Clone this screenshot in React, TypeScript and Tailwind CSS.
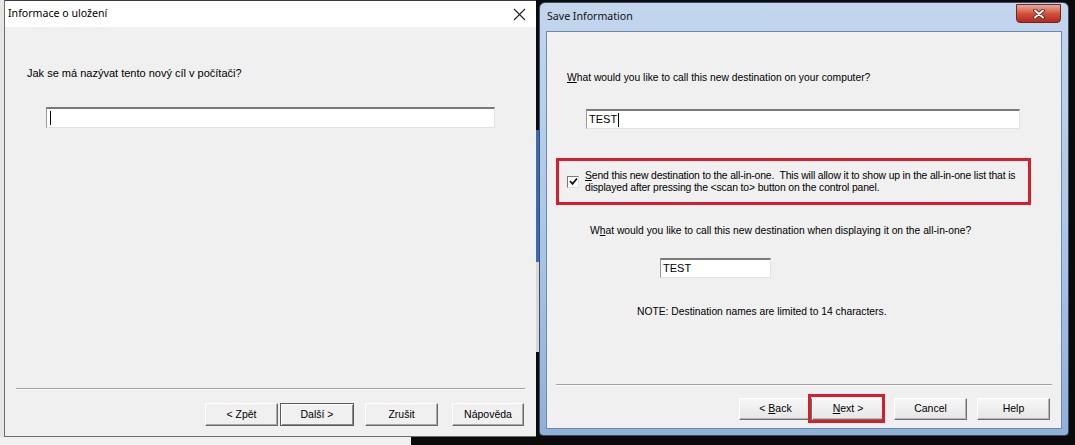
import React from "react";

const ui = "font-['Liberation_Sans',Arial,sans-serif]";
const seg = "font-['Noto_Sans','Open_Sans',sans-serif]";

function ClassicButton({ children, focused = false, w = "w-[73px]" }: { children: React.ReactNode; focused?: boolean; w?: string }) {
  return (
    <button
      className={`${w} h-[23px] ${ui} text-[10.5px] text-black bg-[#f0f0f0] border ${
        focused
          ? "border-[#5a5a5a] shadow-[inset_1px_1px_0_#fff,inset_-1px_-1px_0_#8a8a8a]"
          : "border-t-white border-l-white border-r-[#6b6b6b] border-b-[#6b6b6b] shadow-[inset_-1px_-1px_0_#a8a8a8]"
      } flex items-center justify-center`}
    >
      {children}
    </button>
  );
}

function SunkenInput({ value, caret, className }: { value?: string; caret?: boolean; className: string }) {
  return (
    <div
      className={`${className} bg-white border-t-2 border-l border-t-[#7a7a7a] border-l-[#9a9a9a] border-r border-b border-r-[#e2e2e2] border-b-[#e2e2e2] flex items-center pl-[2px] ${ui} text-[11px] text-black`}
    >
      {value}
      {caret && <span className="ml-[1px] inline-block w-px h-[14px] bg-black" />}
    </div>
  );
}

function CzechDialog() {
  return (
    <div className="w-[532px] h-[437px] flex flex-col border-l border-b border-[#6e6e6e] bg-[#f0f0f0]">
      {/* title bar */}
      <div className="h-[27px] bg-white flex items-center justify-between pl-[3px] pr-[8px] border-t border-[#3c3c3c]">
        <span className={`${seg} text-[10.6px] text-black`}>Informace o uložení</span>
        <svg width="13" height="13" viewBox="0 0 13 13" className="mr-[2px]">
          <path d="M1 1 L12 12 M12 1 L1 12" stroke="#222" strokeWidth="1.1" />
        </svg>
      </div>
      <div className="flex-1 flex flex-col">
        <p className={`${ui} text-[11px] text-black mt-[39px] ml-[22px] leading-[14px]`}>
          Jak se má nazývat tento nový cíl v počítači?
        </p>
        <SunkenInput caret className="ml-[41px] mt-[27px] w-[449px] h-[21px]" />
        <div className="flex-1" />
        <div className="mx-[11px] h-[2px] border-t border-[#a0a0a0] border-b border-b-white" />
        <div className="flex justify-end pr-[12px] mt-[13px] mb-[10px]">
          <ClassicButton>&lt; Zpět</ClassicButton>
          <div className="w-[2px]" />
          <ClassicButton focused w="w-[74px]">Další &gt;</ClassicButton>
          <div className="w-[11px]" />
          <ClassicButton>Zrušit</ClassicButton>
          <div className="w-[14px]" />
          <ClassicButton w="w-[72px]">Nápověda</ClassicButton>
        </div>
      </div>
    </div>
  );
}

function Win7Button({ children, w = "w-[73px]" }: { children: React.ReactNode; w?: string }) {
  return (
    <button
      className={`${w} h-[22px] ${ui} text-[10.5px] text-black bg-gradient-to-b from-[#f7f7f7] to-[#e6e6e6] border border-t-white border-l-white border-r-[#707070] border-b-[#707070] shadow-[inset_-1px_-1px_0_#b5b5b5] flex items-center justify-center`}
    >
      {children}
    </button>
  );
}

function SaveDialog() {
  return (
    <div className="w-[530px] h-[434px] mt-[2px] rounded-t-[6px] rounded-b-[4px] border border-[#3b4d66] bg-gradient-to-b from-[#c3d6ee] via-[#aec7e6] to-[#8fb0d9] flex flex-col px-[6px] pb-[6px]">
      {/* title bar */}
      <div className="h-[28px] flex items-start justify-between">
        <span className={`${seg} text-[10.6px] text-[#111] mt-[6px] ml-[1px]`}>Save Information</span>
        <div className="w-[45px] h-[19px] mt-px mr-px rounded-b-[4px] border border-[#6a2a24] bg-gradient-to-b from-[#e9a99c] via-[#d2513e] to-[#b6281a] flex items-center justify-center">
          <svg width="12" height="10" viewBox="0 0 12 10">
            <path d="M2 1.5 L10 8.5 M10 1.5 L2 8.5" stroke="#4a1a14" strokeWidth="3.6" strokeLinecap="round" />
            <path d="M2 1.5 L10 8.5 M10 1.5 L2 8.5" stroke="#fff" strokeWidth="2" strokeLinecap="round" />
          </svg>
        </div>
      </div>
      {/* client */}
      <div className="flex-1 bg-[#f0f0f0] border border-[#6d87ad] flex flex-col">
        <p className={`${ui} text-[10.3px] text-black mt-[39px] ml-[20px] leading-[13px]`}>
          <span className="underline">W</span>hat would you like to call this new destination on your computer?
        </p>
        <SunkenInput value="TEST" caret className="ml-[39px] mt-[25px] w-[434px] h-[20px]" />
        <div className="ml-[9px] mt-[29px] w-[475px] h-[47px] border-[3px] border-[#d3202c] flex items-center pl-[8px]">
          <div className="w-[12px] h-[12px] bg-white border border-t-[#7a7a7a] border-l-[#7a7a7a] border-r-[#e0e0e0] border-b-[#e0e0e0] flex items-center justify-center">
            <svg width="9" height="9" viewBox="0 0 9 9">
              <path d="M1 4 L3.5 6.8 L8 1.5" fill="none" stroke="#111" strokeWidth="1.8" />
            </svg>
          </div>
          <p className={`${ui} text-[10.4px] text-black leading-[12px] ml-[6px] tracking-[-0.15px] whitespace-nowrap`}>
            <span className="underline">S</span>end this new destination to the all-in-one.&nbsp; This will allow it to show up in the all-in-one list that is
            <br />
            displayed after pressing the &lt;scan to&gt; button on the control panel.
          </p>
        </div>
        <p className={`${ui} text-[10.3px] text-black mt-[19px] ml-[43px] leading-[13px]`}>
          W<span className="underline">h</span>at would you like to call this new destination when displaying it on the all-in-one?
        </p>
        <SunkenInput value="TEST" className="ml-[113px] mt-[21px] w-[111px] h-[20px]" />
        <p className={`${ui} text-[10.3px] text-black mt-[27px] ml-[90px] leading-[13px]`}>
          NOTE: Destination names are limited to 14 characters.
        </p>
        <div className="flex-1" />
        <div className="mx-[9px] h-[2px] border-t border-[#a0a0a0] border-b border-b-white" />
        <div className="flex justify-end pr-[11px] mt-[12px] mb-[8px]">
          <Win7Button>
            &lt;&nbsp;<span className="underline">B</span>ack
          </Win7Button>
          <div className="relative">
            <Win7Button w="w-[72px]">
              <span className="underline">N</span>ext &gt;
            </Win7Button>
            <div className="absolute -left-[4px] -top-[4px] -right-[1px] -bottom-[3px] border-[3px] border-[#d3202c]" />
          </div>
          <div className="w-[10px]" />
          <Win7Button>Cancel</Win7Button>
          <div className="w-[10px]" />
          <Win7Button>Help</Win7Button>
        </div>
      </div>
    </div>
  );
}

export default function App() {
  return (
    <div className="w-[1075px] h-[445px] bg-[#0b0b0b] flex overflow-hidden">
      <div className="w-[536px] flex flex-col">
        <div className="flex">
          <div className="w-[4px] h-[437px] bg-[#e6e6e6]" />
          <CzechDialog />
        </div>
        <div className="flex-1 flex">
          <div className="w-[411px] bg-[#f0f0f0]" />
        </div>
      </div>
      <div className="w-[3px] flex flex-col">
        <div className="h-[130px]" />
        <div className="h-[132px] bg-[#3a6db2]" />
        <div className="h-[90px] bg-[#d8d8d8]" />
      </div>
      <SaveDialog />
    </div>
  );
}
